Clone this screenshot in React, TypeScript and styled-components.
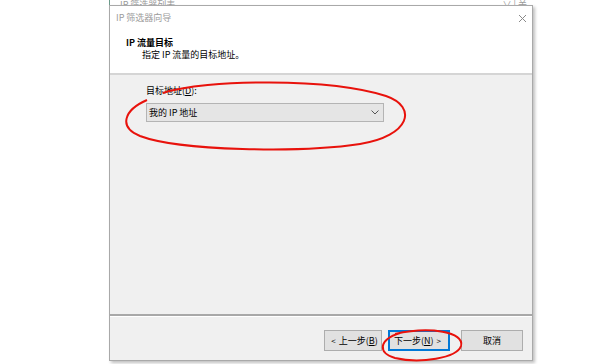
import React from 'react';
import styled, { createGlobalStyle } from 'styled-components';

const GlobalStyle = createGlobalStyle`
  html, body {
    margin: 0;
    padding: 0;
    background: #ffffff;
  }
  body {
    font-family: "Noto Sans CJK SC", "Noto Sans", sans-serif;
    font-size: 9px;
    color: #000;
  }
`;

const Page = styled.div`
  position: relative;
  width: 612px;
  height: 364px;
  overflow: hidden;
  padding-left: 109px;
  box-sizing: border-box;
`;

const BackStrip = styled.div`
  width: 428px;
  height: 5px;
  overflow: hidden;
  display: flex;
  align-items: flex-end;
  justify-content: space-between;
  color: #9a9a9a;
  line-height: 10px;
  font-size: 9px;
  border-left: 1px solid #6a9a8a;
  box-sizing: border-box;
  span {
    transform: translateY(5px);
    padding: 0 10px;
  }
`;

const Dialog = styled.div`
  width: 424px;
  height: 356px;
  box-sizing: border-box;
  border: 1px solid #a9a9a9;
  box-shadow: 2px 2px 3px rgba(0, 0, 0, 0.25);
  display: flex;
  flex-direction: column;
  background: #f0f0f0;
`;

const Top = styled.div`
  background: #ffffff;
  height: 67px;
  display: flex;
  flex-direction: column;
`;

const TitleBar = styled.div`
  height: 24px;
  display: flex;
  align-items: center;
  justify-content: space-between;
  padding: 0 3px 0 6px;
  color: #9b9b9b;
  line-height: 12px;
`;

const CloseBox = styled.div`
  width: 14px;
  height: 14px;
  display: flex;
  align-items: center;
  justify-content: center;
`;

const Heading = styled.div`
  padding: 7px 0 0 16px;
  font-weight: 700;
  line-height: 12px;
`;

const SubHeading = styled.div`
  padding: 0 0 0 32px;
  line-height: 12px;
`;

const Rule = styled.div`
  height: 2px;
  background: #d5d5d5;
  flex: none;
`;

const Body = styled.div`
  flex: 1;
  padding: 10px 0 0 36px;
  display: flex;
  flex-direction: column;
`;

const Label = styled.div`
  line-height: 12px;
  height: 12px;
  u {
    text-decoration: underline;
  }
`;

const Select = styled.div`
  margin-top: 6px;
  width: 238px;
  height: 19px;
  box-sizing: border-box;
  border: 1px solid #b4b4b4;
  background: #e5e5e5;
  display: flex;
  align-items: center;
  justify-content: space-between;
  padding: 0 4px 0 2px;
  line-height: 12px;
`;

const FooterRule = styled.div`
  height: 2px;
  background: #a8a8a8;
  border-bottom: 1px solid #ffffff;
  flex: none;
`;

const Footer = styled.div`
  height: 43px;
  flex: none;
  display: flex;
  justify-content: flex-end;
  align-items: flex-start;
  padding: 13px 9px 0 0;
  box-sizing: border-box;
`;

const Button = styled.div<{ $w: number; $primary?: boolean; $gap: number }>`
  width: ${(p) => p.$w}px;
  height: 21px;
  margin-left: ${(p) => p.$gap}px;
  box-sizing: border-box;
  border: ${(p) => (p.$primary ? '2px solid #0078d7' : '1px solid #adadad')};
  background: #e1e1e1;
  display: flex;
  align-items: center;
  justify-content: center;
  line-height: 12px;
  u {
    text-decoration: underline;
  }
`;

const Arrow = styled.span`
  font-size: 8px;
  margin: 0 3px;
`;

const Marks = styled.svg`
  position: absolute;
  left: 0;
  top: 0;
  pointer-events: none;
`;

export default function App() {
  return (
    <>
      <GlobalStyle />
      <Page>
        <BackStrip>
          <span>IP 筛选器列表</span>
          <span>∨ | 关</span>
        </BackStrip>
        <Dialog>
          <Top>
            <TitleBar>
              <span>IP 筛选器向导</span>
              <CloseBox>
                <svg width="9" height="9" viewBox="0 0 9 9">
                  <path d="M1 1L8 8M8 1L1 8" stroke="#8a8a8a" strokeWidth="1" />
                </svg>
              </CloseBox>
            </TitleBar>
            <Heading>IP 流量目标</Heading>
            <SubHeading>指定 IP 流量的目标地址。</SubHeading>
          </Top>
          <Rule />
          <Body>
            <Label>
              目标地址(<u>D</u>):
            </Label>
            <Select>
              <span>我的 IP 地址</span>
              <svg width="8" height="5" viewBox="0 0 8 5">
                <path d="M0.5 0.5L4 4L7.5 0.5" stroke="#555" strokeWidth="1" fill="none" />
              </svg>
            </Select>
          </Body>
          <FooterRule />
          <Footer>
            <Button $w={58} $gap={0}>
              <Arrow>&lt;</Arrow>
              上一步(<u>B</u>)
            </Button>
            <Button $w={62} $gap={6} $primary>
              下一步(<u>N</u>)<Arrow>&gt;</Arrow>
            </Button>
            <Button $w={62} $gap={11}>
              取消
            </Button>
          </Footer>
        </Dialog>
        <Marks width="612" height="364" viewBox="0 0 612 364">
          <path
            d="M163 93 C205 79, 330 78, 386 96 C418 107, 410 136, 360 144 C300 153, 180 151, 140 136 C118 127, 124 110, 147 100"
            stroke="#e8120c"
            strokeWidth="2"
            fill="none"
          />
          <path
            d="M395 334 C430 326, 465 332, 461 346 C457 358, 420 364, 395 358 C378 353, 378 340, 400 333"
            stroke="#e8120c"
            strokeWidth="2"
            fill="none"
          />
        </Marks>
      </Page>
    </>
  );
}
